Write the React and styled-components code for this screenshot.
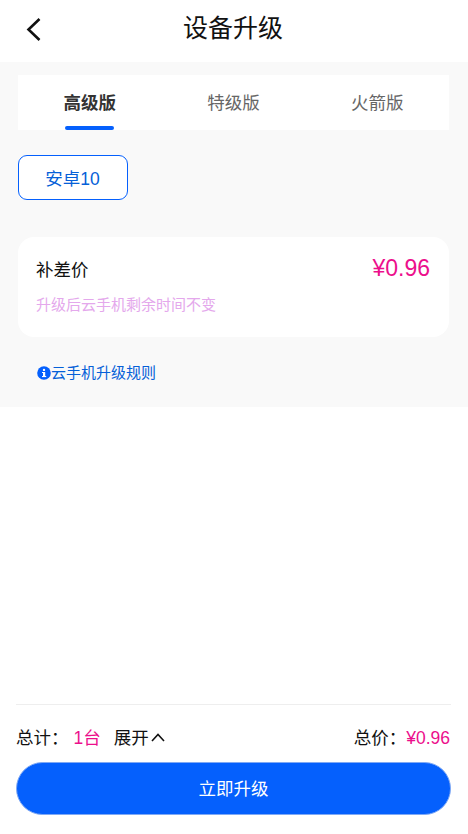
import React, { useState } from 'react';
import styled, { createGlobalStyle } from 'styled-components';

const GlobalStyle = createGlobalStyle`
  html, body {
    margin: 0;
    padding: 0;
    background: #fff;
    font-family: "Liberation Sans", "Noto Sans CJK SC", sans-serif;
  }
  * {
    box-sizing: border-box;
  }
`;

const Page = styled.div`
  width: 468px;
  height: 834px;
  display: flex;
  flex-direction: column;
  background: #fff;
  overflow: hidden;
`;

const Header = styled.div`
  height: 62px;
  flex: none;
  display: flex;
  align-items: center;
  justify-content: center;
  position: relative;
`;

const BackButton = styled.div`
  position: absolute;
  left: 24px;
  top: 17px;
  width: 20px;
  height: 24px;
  display: flex;
`;

const Title = styled.h1`
  margin: 0 2px 6px 0;
  font-size: 25px;
  line-height: 32px;
  font-weight: 400;
  color: #111;
`;

const GreySection = styled.div`
  flex: none;
  height: 345px;
  background: #f9f9f9;
  padding: 13px 19px 0 18px;
`;

const Tabs = styled.div`
  height: 55px;
  display: grid;
  grid-template-columns: repeat(3, 1fr);
  background: #fff;
`;

const Tab = styled.div`
  position: relative;
  display: flex;
  align-items: center;
  justify-content: center;
  padding-bottom: 2px;
  font-size: 17.5px;
  font-weight: ${(p) => (p.$active ? 700 : 400)};
  color: ${(p) => (p.$active ? '#333' : '#666')};
  cursor: pointer;

  ${(p) =>
    p.$active &&
    `
    &::after {
      content: '';
      position: absolute;
      left: 47px;
      bottom: 0;
      width: 49px;
      height: 4px;
      border-radius: 2px;
      background: #0560fd;
    }
  `}
`;

const VersionButton = styled.div`
  width: 110px;
  height: 45px;
  margin-top: 25px;
  padding-right: 1px;
  display: flex;
  align-items: center;
  justify-content: center;
  background: #fff;
  border: 1px solid #0560fd;
  border-radius: 9px;
  font-size: 17.5px;
  color: #0560d8;
`;

const PriceCard = styled.div`
  height: 100px;
  margin-top: 37px;
  padding: 16px 19px 0 18px;
  background: #fff;
  border-radius: 16px;
`;

const PriceRow = styled.div`
  display: flex;
  align-items: center;
  justify-content: space-between;
  height: 30px;
`;

const PriceLabel = styled.span`
  font-size: 17.5px;
  color: #111;
`;

const PriceValue = styled.span`
  font-size: 23px;
  color: #ec0f8c;
`;

const PriceNote = styled.div`
  margin-top: 11px;
  font-size: 15px;
  line-height: 22px;
  color: #e4a8ec;
`;

const RuleLink = styled.div`
  margin: 25px 0 0 19px;
  display: flex;
  align-items: center;
  font-size: 15px;
  line-height: 22px;
  color: #0560d8;
`;

const Spacer = styled.div`
  flex: 1;
`;

const Footer = styled.div`
  flex: none;
  height: 130px;
  margin: 0 17px 0 16px;
  border-top: 1px solid #eee;
  padding-top: 19px;
`;

const TotalRow = styled.div`
  height: 24px;
  display: flex;
  align-items: baseline;
  justify-content: space-between;
  font-size: 17.5px;
  color: #111;
`;

const TotalLeft = styled.div`
  display: flex;
  align-items: baseline;
`;

const Count = styled.span`
  margin: 0 13px 0 5px;
  color: #ec0f8c;
`;

const Expand = styled.span`
  display: inline-flex;
  align-items: center;
  gap: 1px;
  cursor: pointer;
`;

const TotalRight = styled.div`
  display: flex;
  align-items: baseline;
  margin-right: 1px;
`;

const TotalPrice = styled.span`
  color: #ec0f8c;
`;

const SubmitButton = styled.button`
  display: block;
  width: 100%;
  height: 53px;
  margin-top: 14px;
  padding: 0 0 2px;
  border: 1px solid #7fa9f5;
  border-radius: 27px;
  background: #0560fd;
  color: #fff;
  font-family: inherit;
  font-size: 17.5px;
  font-weight: 400;
  cursor: pointer;
`;

const tabs = ['高级版', '特级版', '火箭版'];

const App = () => {
  const [active, setActive] = useState(0);

  return (
    <Page>
      <GlobalStyle />
      <Header>
        <BackButton>
          <svg width="20" height="24" viewBox="0 0 20 24" fill="none">
            <path d="M15.5 2 L4.5 12.5 L15.5 23" stroke="#111" strokeWidth="2.6" />
          </svg>
        </BackButton>
        <Title>设备升级</Title>
      </Header>
      <GreySection>
        <Tabs>
          {tabs.map((name, i) => (
            <Tab key={name} $active={i === active} onClick={() => setActive(i)}>
              {name}
            </Tab>
          ))}
        </Tabs>
        <VersionButton>安卓10</VersionButton>
        <PriceCard>
          <PriceRow>
            <PriceLabel>补差价</PriceLabel>
            <PriceValue>¥0.96</PriceValue>
          </PriceRow>
          <PriceNote>升级后云手机剩余时间不变</PriceNote>
        </PriceCard>
        <RuleLink>
          <svg width="14" height="14" viewBox="0 0 14 14">
            <circle cx="7" cy="7" r="6.8" fill="#0560fd" />
            <rect x="6" y="6" width="2.2" height="4.6" fill="#fff" />
            <rect x="5" y="10" width="4.2" height="1.1" fill="#fff" />
            <rect x="5" y="6" width="2" height="1" fill="#fff" />
            <circle cx="7" cy="3.9" r="1.2" fill="#fff" />
          </svg>
          云手机升级规则
        </RuleLink>
      </GreySection>
      <Spacer />
      <Footer>
        <TotalRow>
          <TotalLeft>
            总计：
            <Count>1台</Count>
            <Expand>
              展开
              <svg width="16" height="10" viewBox="0 0 16 10" fill="none">
                <path d="M2 9 L8 2.5 L14 9" stroke="#111" strokeWidth="1.6" />
              </svg>
            </Expand>
          </TotalLeft>
          <TotalRight>
            总价：
            <TotalPrice>¥0.96</TotalPrice>
          </TotalRight>
        </TotalRow>
        <SubmitButton>立即升级</SubmitButton>
      </Footer>
    </Page>
  );
};

export default App;
